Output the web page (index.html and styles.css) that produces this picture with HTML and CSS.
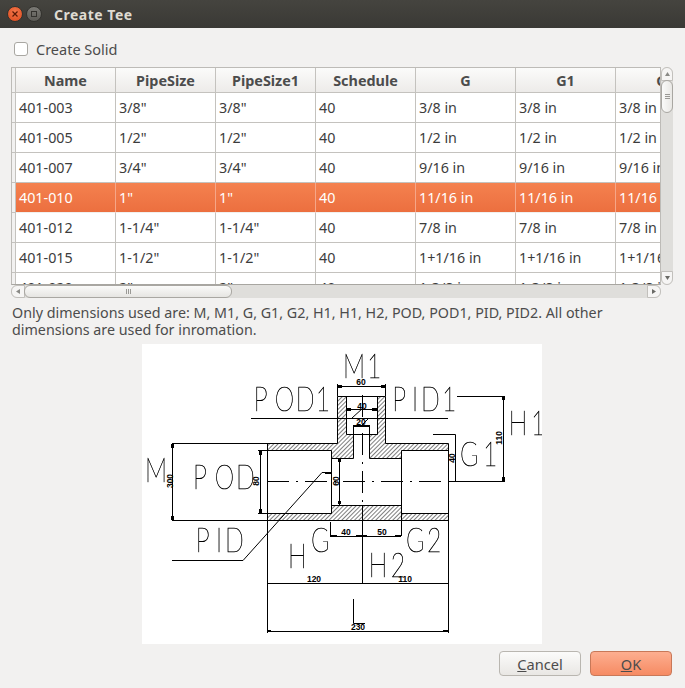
FILE: index.html
```html
<!DOCTYPE html>
<html lang="en">
<head>
  <meta charset="UTF-8" />
  <title>Create Tee</title>
  <link rel="stylesheet" href="styles.css">
</head>
<body>
  <div class="titlebar">
    <span class="win-btn win-close">
      <svg width="8" height="8" viewBox="0 0 8 8"><path d="M1.5 1.5l5 5M6.5 1.5l-5 5" stroke="#5a1a05" stroke-width="1.2"/></svg>
    </span>
    <span class="win-btn win-max"><span class="win-max-box"></span></span>
    <span class="win-title">Create Tee</span>
  </div>

  <label class="solid-row">
    <span class="check"></span>
    <span>Create Solid</span>
  </label>

  <div class="table-area">
    <div class="table-frame">
      <table class="parts">
        <thead>
          <tr>
            <th class="corner"></th><th>Name</th><th>PipeSize</th><th>PipeSize1</th><th>Schedule</th><th>G</th><th>G1</th><th>G2</th>
          </tr>
        </thead>
        <tbody>
          <tr><td class="corner"></td><td>401-003</td><td>3/8"</td><td>3/8"</td><td>40</td><td>3/8 in</td><td>3/8 in</td><td>3/8 in</td></tr>
          <tr><td class="corner"></td><td>401-005</td><td>1/2"</td><td>1/2"</td><td>40</td><td>1/2 in</td><td>1/2 in</td><td>1/2 in</td></tr>
          <tr><td class="corner"></td><td>401-007</td><td>3/4"</td><td>3/4"</td><td>40</td><td>9/16 in</td><td>9/16 in</td><td>9/16 in</td></tr>
          <tr class="selected"><td class="corner"></td><td>401-010</td><td>1"</td><td>1"</td><td>40</td><td>11/16 in</td><td>11/16 in</td><td>11/16 in</td></tr>
          <tr><td class="corner"></td><td>401-012</td><td>1-1/4"</td><td>1-1/4"</td><td>40</td><td>7/8 in</td><td>7/8 in</td><td>7/8 in</td></tr>
          <tr><td class="corner"></td><td>401-015</td><td>1-1/2"</td><td>1-1/2"</td><td>40</td><td>1+1/16 in</td><td>1+1/16 in</td><td>1+1/16 in</td></tr>
          <tr><td class="corner"></td><td>401-020</td><td>2"</td><td>2"</td><td>40</td><td>1-3/8 in</td><td>1-3/8 in</td><td>1-3/8 in</td></tr>
        </tbody>
      </table>
    </div>

    <div class="vscroll">
      <span class="arrow-box arrow-top"><svg width="5" height="4" viewBox="0 0 5 4"><path d="M0 4L2.5 0L5 4z" fill="#8a8a86"/></svg></span>
      <span class="vthumb"><span class="grip-v"></span></span>
      <span class="track-fill"></span>
      <span class="arrow-box arrow-bottom"><svg width="5" height="4" viewBox="0 0 5 4"><path d="M0 0L2.5 4L5 0z" fill="#6a6a66"/></svg></span>
    </div>

    <div class="hscroll">
      <span class="arrow-box arrow-left"><svg width="4" height="5" viewBox="0 0 4 5"><path d="M4 0L0 2.5L4 5z" fill="#8a8a86"/></svg></span>
      <span class="hthumb"><span class="grip-h"></span></span>
      <span class="track-fill"></span>
      <span class="arrow-box arrow-right"><svg width="4" height="5" viewBox="0 0 4 5"><path d="M0 0L4 2.5L0 5z" fill="#6a6a66"/></svg></span>
    </div>
  </div>

  <p class="note">Only dimensions used are: M, M1, G, G1, G2, H1, H1, H2, POD, POD1, PID, PID2. All other<br>dimensions are used for inromation.</p>

  <div class="drawing-wrap">
    <svg class="drawing" width="400" height="300" viewBox="142 344 400 300">
      <defs>
        <pattern id="hatch" width="3" height="3" patternUnits="userSpaceOnUse" patternTransform="rotate(45)">
          <line x1="0" y1="0" x2="0" y2="3" stroke="#000" stroke-width="1"/>
        </pattern>
      </defs>

      <!-- section hatching -->
      <g fill="url(#hatch)">
        <path d="M267 443H337V396H346V434H353V458H331V450H267z"/>
        <path d="M386 396H377V434H369V458H401V450H448V443H386z"/>
        <path d="M267 513H331V505H401V513H448V520H267z"/>
      </g>

      <!-- body outline -->
      <g class="ln">
        <path d="M172 443.5H337.5V396.5H385.5V443.5H448.5V633"/>
        <path d="M172 520.5H448.5"/>
        <path d="M267.5 443V633"/>
        <path d="M258 450.5H331.5V513.5H258"/>
        <path d="M448 450.5H401.5V536"/>
        <path d="M331.5 513.5V505.5H401.5V513.5H448"/>
        <path d="M331 458.5H353.5V425"/>
        <path d="M401 458.5H369.5V425"/>
        <path d="M346.5 396V434.5H377.5V396"/>
      </g>

      <!-- dimension lines -->
      <g class="ln">
        <path d="M337 386.5H386M337.5 384V396M385.5 384V396"/>
        <path d="M251 418.5H448"/>
        <path d="M346 409.5H377"/>
        <path d="M353 425.5H369"/>
        <path d="M457 396.5H505M503.5 396V481"/>
        <path d="M433 434.5H455.5V481"/>
        <path d="M172.5 443V520"/>
        <path d="M260.5 450V513"/>
        <path d="M339.5 458V505"/>
        <path d="M172 560.5H243L322 472.5H332"/>
        <path d="M330.5 522V536.5H401"/>
        <path d="M267 583.5H448"/>
        <path d="M267 631.5H448"/>
        <path d="M353.5 599V623.5H365"/>
        <path d="M352 418L363 408M363 424L369 418"/>
        <path d="M448 481.5H505"/>
        <path d="M362.5 505V584"/>
      </g>

      <!-- arrow ticks -->
      <g class="ticks">
        <path d="M337 385h5v3h-5zM381 385h5v3h-5zM502 396h3v4h-3zM502 477h3v4h-3z"/>
        <path d="M171 444h3v4h-3zM171 516h3v4h-3zM259 451h3v4h-3zM259 509h3v4h-3z"/>
        <path d="M338 459h3v3h-3zM338 501h3v3h-3zM330 535h7v2h-7zM356 535h11v2h-11zM395 535h6v2h-6z"/>
        <path d="M267 630h4v2h-4zM443 630h6v2h-6zM346 408h5v3h-5zM372 408h5v3h-5zM353 425h16v2h-16zM325 472h7v2h-7z"/>
      </g>

      <!-- centre lines -->
      <g class="ln">
        <path class="centre" d="M267 481.5H448"/>
        <path class="centre" d="M362.5 395V505"/>
      </g>

      <!-- big labels -->
      <g class="big" transform="scale(.75 1)">
        <text x="457.3 489.3" y="378">M1</text>
        <text x="338.3 366.3 394.3 420.9" y="411">POD1</text>
        <text x="523 549.3 561.3 589.3" y="411">PID1</text>
        <text x="678.3 708" y="435">H1</text>
        <text x="613.3 644" y="466">G1</text>
        <text x="193.3" y="482">M</text>
        <text x="257.3 286.3 314.7" y="489">POD</text>
        <text x="260.9 288 300" y="552">PID</text>
        <text x="384" y="568">H</text>
        <text x="414.7" y="552">G</text>
        <text x="491.6 520.9" y="577">H2</text>
        <text x="541.3 569.3" y="552">G2</text>
      </g>

      <!-- small dimension numbers -->
      <g class="small">
        <text x="361" y="385">60</text>
        <text x="362" y="409">40</text>
        <text x="361" y="425">20</text>
        <text x="346" y="535">40</text>
        <text x="382" y="535">50</text>
        <text x="314" y="582">120</text>
        <text x="405" y="582">110</text>
        <text x="358" y="630">230</text>
        <text transform="translate(172.5 481) rotate(-90)">300</text>
        <text transform="translate(259 481) rotate(-90)">80</text>
        <text transform="translate(339 481) rotate(-90)">60</text>
        <text transform="translate(455 458) rotate(-90)">40</text>
        <text transform="translate(502 438) rotate(-90)">110</text>
      </g>
    </svg>
  </div>

  <div class="buttons">
    <button class="btn btn-cancel"><u>C</u>ancel</button>
    <button class="btn btn-ok"><u>O</u>K</button>
  </div>
</body>
</html>
```

FILE: styles.css
```css
html, body {
  margin: 0;
  height: 688px;
  overflow: hidden;
}
body {
  background: #f2f1f0;
  color: #4c4c4c;
  font-family: "Noto Sans", "Open Sans", sans-serif;
  font-size: 14px;
}

/* window title */
.titlebar {
  height: 28px;
  display: flex;
  align-items: center;
  padding-left: 7px;
  background: linear-gradient(#45443f, #3a3935);
  box-sizing: border-box;
}
.win-btn {
  width: 16px;
  height: 16px;
  border-radius: 50%;
  display: flex;
  align-items: center;
  justify-content: center;
  box-sizing: border-box;
}
.win-close {
  background: radial-gradient(circle at 50% 35%, #f4764a, #dc4a1c);
  border: 1px solid #33322e;
}
.win-max {
  margin-left: 3px;
  background: linear-gradient(#7b7a75, #5c5b56);
  border: 1px solid #33322e;
}
.win-max-box {
  width: 6px;
  height: 6px;
  border: 1px solid #33322e;
  box-sizing: border-box;
}
.win-title {
  margin-left: 12px;
  color: #dfdbd2;
  font-size: 14px;
  font-weight: 700;
  letter-spacing: .5px;
}

/* checkbox row */
.solid-row {
  display: flex;
  align-items: center;
  height: 20px;
  margin: 11px 0 0 14px;
  font-size: 14.5px;
}
.check {
  width: 14px;
  height: 14px;
  margin-right: 8px;
  background: #fff;
  border: 1px solid #a9a7a2;
  border-radius: 3px;
  box-sizing: border-box;
}

/* table and scroll bars */
.table-area {
  display: grid;
  grid-template-columns: 650px 12px;
  grid-template-rows: 218px 14px;
  margin: 8px 0 0 11px;
  width: 662px;
}
.table-frame {
  overflow: hidden;
  background: #fff;
  border: 1px solid #bdbbb7;
  border-bottom-color: #a8a6a1;
  box-sizing: border-box;
}
.parts {
  border-collapse: separate;
  border-spacing: 0;
  table-layout: fixed;
  width: 704px;
}
.parts th, .parts td {
  width: 100px;
  box-sizing: border-box;
  border-right: 1px solid #c4c2be;
  border-bottom: 1px solid #c4c2be;
  padding: 0 0 0 3px;
  white-space: nowrap;
  overflow: hidden;
}
.parts th {
  height: 25px;
  padding: 0;
  color: #4c4c4c;
  font-size: 14.4px;
  font-weight: 700;
  text-align: center;
  background: linear-gradient(#fbfbfa, #edebe9);
}
.parts td {
  height: 30px;
  color: #3c3c3c;
  font-size: 14.3px;
}
.parts .corner {
  width: 4px;
  padding: 0;
  background: #f2f1f0;
}
.parts .selected td {
  background: linear-gradient(#f4814f, #ec6f3f);
  color: #fff;
  border-right-color: #f6a688;
  border-bottom-color: #f0f0ee;
}
.parts .selected .corner {
  background: #f2f1f0;
  border-right-color: #c4c2be;
  border-bottom-color: #c4c2be;
}

.vscroll, .hscroll {
  display: flex;
  background: #dfdedb;
}
.vscroll {
  flex-direction: column;
  width: 12px;
  border-radius: 6px;
}
.hscroll {
  grid-column: 1;
  height: 13px;
  border-radius: 6px;
}
.track-fill {
  flex: 1;
}
.arrow-box {
  display: flex;
  align-items: center;
  justify-content: center;
  flex: none;
  background: #f6f5f4;
  border: 1px solid #c2c0bc;
  box-sizing: border-box;
}
.arrow-top {
  height: 14px;
  border-radius: 6px 6px 0 0;
}
.arrow-bottom {
  height: 14px;
  border-radius: 0 0 6px 6px;
}
.arrow-left {
  width: 14px;
  border-radius: 6px 0 0 6px;
}
.arrow-right {
  width: 14px;
  border-radius: 0 6px 6px 0;
}
.vthumb {
  height: 33px;
  margin-top: -1px;
  flex: none;
  display: flex;
  align-items: center;
  justify-content: center;
  background: linear-gradient(90deg, #fafaf9, #e9e8e5);
  border: 1px solid #a9a7a2;
  border-radius: 6px;
  box-sizing: border-box;
}
.hthumb {
  width: 208px;
  margin-left: -1px;
  flex: none;
  display: flex;
  align-items: center;
  justify-content: center;
  background: linear-gradient(#fafaf9, #e6e5e2);
  border: 1px solid #a9a7a2;
  border-radius: 6px;
  box-sizing: border-box;
}
.grip-v {
  width: 5px;
  height: 5px;
  background: repeating-linear-gradient(#9a9995 0 1px, transparent 1px 2px);
}
.grip-h {
  width: 5px;
  height: 5px;
  background: repeating-linear-gradient(90deg, #9a9995 0 1px, transparent 1px 2px);
}

/* note */
.note {
  margin: 5px 0 0 12px;
  line-height: 17px;
  font-size: 14.3px;
  white-space: nowrap;
}

/* drawing */
.drawing-wrap {
  width: 400px;
  height: 300px;
  margin: 6px 0 0 142px;
  background: #fff;
}
.drawing {
  display: block;
}
.ln path {
  fill: none;
  stroke: #000;
  stroke-width: 1;
}
.ln .centre {
  stroke-dasharray: 22 7 2 7;
}
.ticks path {
  fill: #000;
}
.big {
  filter: grayscale(1);
}
.big text {
  font-family: Lato, Roboto, sans-serif;
  font-size: 33px;
  font-weight: 100;
  fill: #000;
  stroke: #000;
  stroke-width: .5;
}
.small text {
  font-family: "Liberation Sans Narrow", "Liberation Sans", sans-serif;
  font-size: 8.5px;
  font-weight: 700;
  text-anchor: middle;
  fill: #000;
}

/* buttons */
.buttons {
  display: flex;
  justify-content: flex-end;
  gap: 9px;
  margin: 7px 13px 0 0;
}
.btn {
  width: 82px;
  height: 25px;
  padding: 0;
  font-family: inherit;
  font-size: 14.6px;
  color: #4c4c4c;
  border-radius: 4px;
  box-sizing: border-box;
}
.btn-cancel {
  background: linear-gradient(#fbfbfa, #e9e7e4);
  border: 1px solid #b9b6b0;
}
.btn-ok {
  background: linear-gradient(#fdae90, #f68b63);
  border: 1px solid #c87858;
}
```
